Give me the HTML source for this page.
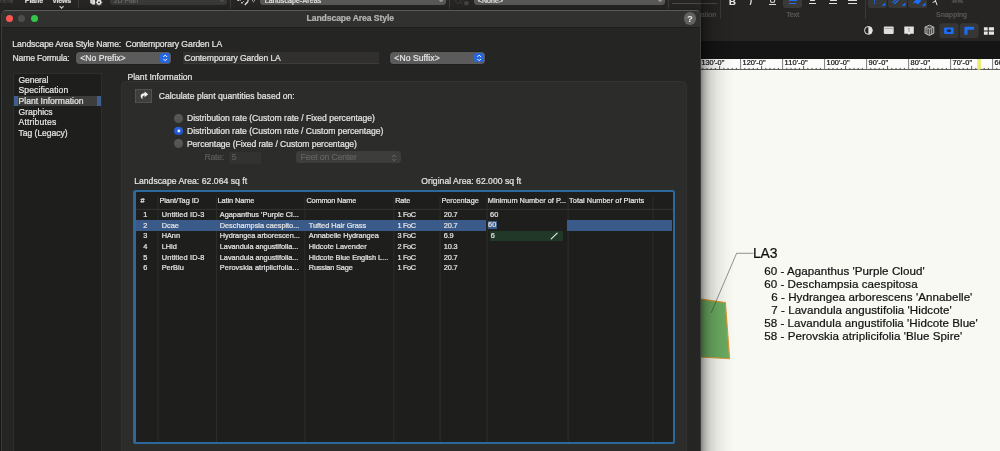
<!DOCTYPE html>
<html lang="en"><head><meta charset="utf-8"><title>Landscape Area Style</title>
<style>
html,body{margin:0;padding:0}
body{width:1000px;height:451px;overflow:hidden;background:#262524;position:relative;font-family:"Liberation Sans",sans-serif}
.layer{position:absolute;left:0;top:0;width:1000px;height:451px;overflow:hidden;will-change:transform}
.t{position:absolute;white-space:nowrap;line-height:12px;-webkit-text-stroke:.22px currentColor}
.a{position:absolute}
.dd{position:absolute;background:#5b5b5b;border-radius:3.5px;box-shadow:0 0 0 .5px rgba(0,0,0,.25)}
.step{position:absolute;background:#2667e0;border-radius:2.5px}
.sep{position:absolute;width:1px;background:#3a3a39}
</style></head><body>

<!-- ================= app toolbar ================= -->
<div class="layer" style="height:41.2px;background:#262524">
  <div class="sep" style="left:78px;top:0;height:8px"></div>
  <svg class="a" style="left:58px;top:4.5px" width="8" height="5" viewBox="0 0 8 5"><path d="M1.6 1.1 L3.6 3.1 L5.6 1.1" fill="none" stroke="#d8d8d8" stroke-width="1.1"/></svg>
  <svg class="a" style="left:89px;top:0" width="15" height="7" viewBox="0 0 15 7"><path d="M1.2 0H6.1V4.5L3.9 4.8 1.2 2.9z" fill="#dadada"/><path d="M3.2 0V3.9" stroke="#9a9a9a" stroke-width=".5"/><circle cx="10" cy="2.3" r="1.75" fill="none" stroke="#e4e4e4" stroke-width="1.5"/><path d="M10 -1v6.6M6.7 2.3h6.6M7.7 0l4.6 4.6M12.3 0L7.7 4.6" stroke="#e4e4e4" stroke-width="1"/><circle cx="10" cy="2.3" r=".9" fill="#262524"/></svg>
  <div class="a" style="left:109.8px;top:-6px;width:117.2px;height:10.9px;background:#393938;border-radius:3.5px"></div>
  <svg class="a" style="left:219px;top:0" width="6" height="4" viewBox="0 0 6 4"><path d="M1.6 0L3.1 1.5 4.6 0" fill="none" stroke="#666" stroke-width=".9"/></svg>
  <div class="sep" style="left:230.3px;top:0;height:8.5px"></div>
  <svg class="a" style="left:236px;top:0" width="22" height="6" viewBox="0 0 22 6"><path d="M1.4 0h1.5v.9H1.4zM3.4 0h1.6v.6H3.4zM5.2 2.1h1.5v1.4H5.2zM11.2 0h1.7v.8h-1.7z" fill="#e2e2e2"/><path d="M9.2 4.5L11.9 1.8" stroke="#ececec" stroke-width="1.3" stroke-linecap="round"/><path d="M7.2 1.2l1 .9" stroke="#cfcfcf" stroke-width=".8"/><path d="M16.4 0c0 2.2 2.2 2.2 2.2 0" stroke="#d0d0d0" stroke-width=".8" fill="none"/></svg>
  <div class="a" style="left:260.4px;top:-6px;width:185.5px;height:10.9px;background:#585857;border-radius:3.5px"></div>
  <svg class="a" style="left:438px;top:0" width="6" height="4" viewBox="0 0 6 4"><path d="M1.6 0L3.1 1.5 4.6 0" fill="none" stroke="#dcdcdc" stroke-width=".9"/></svg>
  <div class="sep" style="left:449px;top:0;height:8.5px"></div>
  <svg class="a" style="left:454px;top:0" width="16" height="7" viewBox="0 0 16 7"><path d="M1.6 0c0 4.6 5 4.6 5 0M6 2.2l2.6 1.4M8.6 0l.8.8" fill="none" stroke="#3c3c3b" stroke-width=".9"/><circle cx="12.4" cy="3.2" r="2.3" fill="#444443"/></svg>
  <div class="a" style="left:474px;top:-6px;width:191px;height:10.9px;background:#585857;border-radius:3.5px"></div>
  <svg class="a" style="left:657px;top:0" width="6" height="4" viewBox="0 0 6 4"><path d="M1.6 0L3.1 1.5 4.6 0" fill="none" stroke="#dcdcdc" stroke-width=".9"/></svg>
  <div class="sep" style="left:668.3px;top:0;height:8.5px"></div>
  <div class="a" style="left:672px;top:3px;width:45px;height:1px;background:#4a4a49"></div>
  <div class="sep" style="left:720px;top:0;height:19px"></div>
  <!-- text style buttons -->
  <div class="a" style="left:769.3px;top:3.6px;width:6.7px;height:.9px;background:#dcdcdc"></div>
  <div class="a" style="left:783px;top:-5px;width:19.2px;height:12.8px;background:#3a3a39;border-radius:3px"></div>
  <div class="a" style="left:788.7px;top:-.6px;width:8.1px;height:1.2px;background:#1f6df2"></div>
  <div class="a" style="left:789.3px;top:3px;width:6.9px;height:1.2px;background:#1f6df2"></div>
  <div class="a" style="left:810.3px;top:-.6px;width:5px;height:1.2px;background:#e0e0e0"></div>
  <div class="a" style="left:809px;top:2.8px;width:7px;height:1.1px;background:#e0e0e0"></div>
  <div class="a" style="left:830.2px;top:-.6px;width:6.8px;height:1.2px;background:#e0e0e0"></div>
  <div class="a" style="left:829.2px;top:2.8px;width:7.8px;height:1.1px;background:#e0e0e0"></div>
  <div class="a" style="left:848px;top:-.6px;width:8.5px;height:1.2px;background:#e0e0e0"></div>
  <div class="a" style="left:848px;top:2.8px;width:8.5px;height:1.1px;background:#e0e0e0"></div>
  <div class="sep" style="left:865.2px;top:0;height:19px"></div>
  <!-- snapping buttons -->
  <div class="a" style="left:868.1px;top:-5px;width:18.8px;height:12.7px;background:#373736;border-radius:2.5px"></div>
  <div class="a" style="left:888px;top:-5px;width:18.9px;height:12.7px;background:#373736;border-radius:2.5px"></div>
  <div class="a" style="left:908px;top:-5px;width:19px;height:12.7px;background:#373736;border-radius:2.5px"></div>
  <svg class="a" style="left:868px;top:0" width="60" height="8" viewBox="0 0 60 8">
    <path d="M6.6 0v1.2M6.6 2.3v1.5" stroke="#1f6df2" stroke-width="1.2"/>
    <path d="M13.5 5.8l3.7-3.4v3.4zM33.6 5.8l3.7-3.4v3.4zM53.8 5.8l3.7-3.4v3.4z" fill="#1f6df2"/>
    <path d="M24.3 2.6L27.4 0M26.3 4L30.4 0" stroke="#1f6df2" stroke-width="1.2"/>
    <path d="M47.5 0h5.3v1.6L50 4.5 47.2 2.7 45.4 3.7 45 3.1z" fill="#1f6df2"/>
  </svg>
  <svg class="a" style="left:931px;top:0" width="8" height="6" viewBox="0 0 8 6"><path d="M4.2 0C4.8 1.6 5.4 3.2 6 4.8M4.7 1.3L2 2.3" stroke="#e6e6e6" stroke-width="1" fill="none" stroke-linecap="round"/></svg>
  <svg class="a" style="left:950px;top:0" width="16" height="4" viewBox="0 0 16 4"><path d="M3 0h4.2v2.8H1.2zM7.9 0h4.2l1.8 2.8h-6z" fill="#484847"/></svg>
  <!-- second row icons -->
  <svg class="a" style="left:860px;top:22px" width="140" height="18" viewBox="0 0 140 18">
    <circle cx="8.4" cy="8.4" r="3.9" fill="none" stroke="#e4e4e4" stroke-width="1"/>
    <path d="M8.4 4.5a3.9 3.9 0 0 1 0 7.8z" fill="#e4e4e4"/>
    <rect x="23.8" y="4.6" width="9.9" height="7.3" rx=".8" fill="#dedede"/>
    <rect x="24.5" y="6.3" width="8.5" height=".6" fill="#8a8a8a"/>
    <path d="M44.3 4.5h9.5v7.2h-3.6l-1.2 1.4-1.2-1.4h-3.5z" fill="#e4e4e4"/>
    <path d="M49 6v3.6" stroke="#555" stroke-width="1" stroke-dasharray="1 .6"/>
    <path d="M69.4 3.2l4.4 1.9v6.2l-4.4 2.1-4.4-2.1V5.1z" fill="#4a4a49" stroke="#c8c8c8" stroke-width=".9" stroke-linejoin="round"/>
    <path d="M65 5.1l4.4 1.8 4.4-1.8M69.4 6.9v6.4M67 6.2v6M71.6 6.2v6" fill="none" stroke="#c8c8c8" stroke-width=".7"/>
    <rect x="79.5" y="1.2" width="19" height="14.8" rx="3" fill="#363635"/>
    <rect x="99.7" y="1.2" width="19" height="14.8" rx="3" fill="#363635"/>
    <rect x="84.1" y="5.5" width="9.5" height="6.6" rx=".8" fill="#1f6df2"/>
    <ellipse cx="88.9" cy="8.8" rx="2.3" ry="1.45" fill="#1d2a44"/>
    <path d="M104.4 4.8h9.7v3h-6.6v4.9h-3.1z" fill="#1f6df2"/>
    <path d="M123.9 5.2h3.8v3.3h-3.8zM128.8 5.2h5.2v3.3h-5.2zM123.9 9.5h3.8v3.3h-3.8zM128.8 9.5h5.2v3.3h-5.2z" fill="#e6e6e6"/>
  </svg>
<span class="t" style="left:676.29px;top:9.43px;font-size:7px;color:#5e5e5d;letter-spacing:0.061px;">Visualization</span>
<span class="t" style="left:786.49px;top:9.43px;font-size:7px;color:#5e5e5d;letter-spacing:-0.041px;">Text</span>
<span class="t" style="left:936.09px;top:9.43px;font-size:7px;color:#5e5e5d;letter-spacing:0.175px;">Snapping</span>
<span class="t" style="left:-2.71px;top:-5.43px;font-size:7px;color:#4a4a4a;letter-spacing:0.291px;">View</span>
<span class="t" style="left:24.79px;top:-5.43px;font-size:7px;color:#dcdcdc;letter-spacing:-0.067px;font-weight:bold;">Plane</span>
<span class="t" style="left:52.29px;top:-5.43px;font-size:7px;color:#dcdcdc;letter-spacing:-0.200px;font-weight:bold;">Views</span>
<span class="t" style="left:113.79px;top:-5.13px;font-size:7px;color:#686868;letter-spacing:-0.081px;">2D Plan</span>
<span class="t" style="left:264.79px;top:-5.13px;font-size:7px;color:#e4e4e4;letter-spacing:0.110px;">Landscape-Areas</span>
<span class="t" style="left:477.79px;top:-5.13px;font-size:7px;color:#e4e4e4;letter-spacing:0.100px;">&lt;None&gt;</span>
<span class="t" style="left:729.12px;top:-4.39px;font-size:9.5px;color:#e0e0e0;font-weight:bold;">B</span>
<span class="t" style="left:749.42px;top:-4.39px;font-size:9.5px;color:#e0e0e0;font-style:italic;">I</span>
<span class="t" style="left:769.54px;top:-6.15px;font-size:8.5px;color:#e0e0e0;">U</span>
</div>

<!-- ================= dark band + canvas ================= -->
<div class="layer" style="top:41.2px;height:409.8px;background:#f9f9f3">
  <div class="a" style="left:0;top:0;width:1000px;height:17.6px;background:#151515"></div>
  <div class="a" style="left:0;top:0;width:700px;height:410px;background:#1c1c1b"></div>
</div>
<div class="layer">
  <!-- ruler -->
  <div class="a" style="left:700px;top:58.8px;width:300px;height:10.9px;background:#fcfcfa"></div>
  <svg class="a" style="left:696px;top:58.8px" width="304" height="12" viewBox="0 0 304 12">
        <path d="M0 10.45H304" stroke="#3c3c3c" stroke-width=".85"/>
    <path d="M2.60 0V10.5M44.60 0V10.5M86.60 0V10.5M128.60 0V10.5M170.60 0V10.5M212.60 0V10.5M254.60 0V10.5M296.60 0V10.5" stroke="#5a5a5a" stroke-width=".8" fill="none"/>
    <path d="M6.80 8.9V10.5M11.00 8.9V10.5M15.20 8.9V10.5M19.40 8.9V10.5M23.60 6.9V10.5M27.80 8.9V10.5M32.00 8.9V10.5M36.20 8.9V10.5M40.40 8.9V10.5M48.80 8.9V10.5M53.00 8.9V10.5M57.20 8.9V10.5M61.40 8.9V10.5M65.60 6.9V10.5M69.80 8.9V10.5M74.00 8.9V10.5M78.20 8.9V10.5M82.40 8.9V10.5M90.80 8.9V10.5M95.00 8.9V10.5M99.20 8.9V10.5M103.40 8.9V10.5M107.60 6.9V10.5M111.80 8.9V10.5M116.00 8.9V10.5M120.20 8.9V10.5M124.40 8.9V10.5M132.80 8.9V10.5M137.00 8.9V10.5M141.20 8.9V10.5M145.40 8.9V10.5M149.60 6.9V10.5M153.80 8.9V10.5M158.00 8.9V10.5M162.20 8.9V10.5M166.40 8.9V10.5M174.80 8.9V10.5M179.00 8.9V10.5M183.20 8.9V10.5M187.40 8.9V10.5M191.60 6.9V10.5M195.80 8.9V10.5M200.00 8.9V10.5M204.20 8.9V10.5M208.40 8.9V10.5M216.80 8.9V10.5M221.00 8.9V10.5M225.20 8.9V10.5M229.40 8.9V10.5M233.60 6.9V10.5M237.80 8.9V10.5M242.00 8.9V10.5M246.20 8.9V10.5M250.40 8.9V10.5M258.80 8.9V10.5M263.00 8.9V10.5M267.20 8.9V10.5M271.40 8.9V10.5M275.60 6.9V10.5M279.80 8.9V10.5M284.00 8.9V10.5M288.20 8.9V10.5M292.40 8.9V10.5M300.80 8.9V10.5M305.00 8.9V10.5M309.20 8.9V10.5M313.40 8.9V10.5M317.60 6.9V10.5M321.80 8.9V10.5M326.00 8.9V10.5M330.20 8.9V10.5M334.40 8.9V10.5" stroke="#2e2e2e" stroke-width=".8" fill="none"/>
    <rect x="281.4" y="0" width="3.3" height="10.6" fill="#e3e248"/>
    <rect x="282.4" y="0" width="1.2" height="10.6" fill="#f2f193"/>
  </svg>
  <!-- green landscape area -->
  <svg class="a" style="left:696px;top:240px" width="100" height="130" viewBox="0 0 100 130">
        <path d="M0 58.4L29.4 62.6 33.6 118.8 0 116.7z" fill="#6bab61" stroke="#dc9633" stroke-width="1.15" stroke-linejoin="round"/>
    <path d="M15.1 72.9L40.6 13.3H57.4" fill="none" stroke="#3c3c3c" stroke-width=".55"/>
  </svg>
<span class="t" style="left:752.88px;top:247.35px;font-size:13.9px;color:#111;">LA3</span>
<span class="t" style="left:764.15px;top:264.51px;font-size:11.6px;color:#111;letter-spacing:0.047px;">60 - Agapanthus 'Purple Cloud'</span>
<span class="t" style="left:764.15px;top:277.51px;font-size:11.6px;color:#111;letter-spacing:0.054px;">60 - Deschampsia caespitosa</span>
<span class="t" style="left:771.25px;top:290.81px;font-size:11.6px;color:#111;letter-spacing:0.038px;">6 - Hydrangea arborescens 'Annabelle'</span>
<span class="t" style="left:771.25px;top:304.21px;font-size:11.6px;color:#111;letter-spacing:0.037px;">7 - Lavandula angustifolia 'Hidcote'</span>
<span class="t" style="left:764.15px;top:317.21px;font-size:11.6px;color:#111;letter-spacing:0.042px;">58 - Lavandula angustifolia 'Hidcote Blue'</span>
<span class="t" style="left:764.15px;top:330.31px;font-size:11.6px;color:#111;letter-spacing:0.058px;">58 - Perovskia atriplicifolia 'Blue Spire'</span>
<span class="t" style="left:701.38px;top:56.83px;font-size:7.4px;color:#111;letter-spacing:0.001px;">130'-0"</span>
<span class="t" style="left:742.58px;top:56.83px;font-size:7.4px;color:#111;letter-spacing:0.001px;">120'-0"</span>
<span class="t" style="left:784.58px;top:56.83px;font-size:7.4px;color:#111;letter-spacing:0.092px;">110'-0"</span>
<span class="t" style="left:826.58px;top:56.83px;font-size:7.4px;color:#111;letter-spacing:0.001px;">100'-0"</span>
<span class="t" style="left:868.58px;top:56.83px;font-size:7.4px;color:#111;letter-spacing:0.123px;">90'-0"</span>
<span class="t" style="left:910.58px;top:56.83px;font-size:7.4px;color:#111;letter-spacing:0.123px;">80'-0"</span>
<span class="t" style="left:952.58px;top:56.83px;font-size:7.4px;color:#111;letter-spacing:0.123px;">70'-0"</span>
<span class="t" style="left:994.58px;top:56.83px;font-size:7.4px;color:#111;letter-spacing:0.123px;">60'-0"</span>
  <!-- dialog shadow over canvas -->
  <div class="a" style="left:700.6px;top:0;width:34px;height:451px;background:linear-gradient(90deg,rgba(0,0,0,.33) 0,rgba(0,0,0,.24) 10%,rgba(0,0,0,.15) 28%,rgba(0,0,0,.07) 50%,rgba(0,0,0,.022) 75%,rgba(0,0,0,0) 100%)"></div>
</div>

<!-- ================= dialog ================= -->
<div class="layer">
  <div class="a" style="left:1.1px;top:10.1px;width:699.7px;height:460px;background:#252524;border-radius:5px 5px 0 0;box-shadow:0 2px 10px rgba(0,0,0,.4);overflow:hidden">
    <div class="a" style="left:0;top:0;width:700px;height:17.1px;background:#313130;border-bottom:.8px solid #1d1d1c"></div>
    <div class="a" style="left:0;top:0;width:699.7px;height:460px;box-sizing:border-box;border:1.3px solid #3c3c3b;border-top:1px solid #5a5a59;border-radius:5px 5px 0 0"></div>
  </div>
  <!-- traffic lights -->
  <div class="a" style="left:5.6px;top:15.1px;width:7.4px;height:7.4px;border-radius:50%;background:#fc5753"></div>
  <div class="a" style="left:17.8px;top:15.1px;width:7.4px;height:7.4px;border-radius:50%;background:#4e4e4d"></div>
  <div class="a" style="left:30.7px;top:15.1px;width:7.4px;height:7.4px;border-radius:50%;background:#33c748"></div>
  <!-- help -->
  <div class="a" style="left:683.5px;top:12.4px;width:12.5px;height:12.5px;border-radius:50%;background:#626261"></div>
  <span class="t" style="left:687px;top:13px;font-size:9.5px;font-weight:bold;color:#ececec;-webkit-text-stroke:0">?</span>

  <!-- prefix dropdown -->
  <div class="dd" style="left:75.7px;top:51.6px;width:95.4px;height:12.2px"></div>
  <div class="step" style="left:160px;top:53px;width:10.4px;height:9.7px"></div>
  <svg class="a" style="left:160px;top:53px" width="10.4" height="9.7" viewBox="0 0 10.4 9.7"><path d="M3.4 3.9L5.2 2.1 7 3.9M3.4 5.9L5.2 7.7 7 5.9" fill="none" stroke="#fff" stroke-width="1"/></svg>
  <!-- name field -->
  <div class="a" style="left:182.6px;top:52.4px;width:196.2px;height:11.3px;background:#31302f;box-shadow:inset 0 -0.6px 0 #484847"></div>
  <!-- suffix dropdown -->
  <div class="dd" style="left:389.7px;top:51.5px;width:95.4px;height:12.2px"></div>
  <div class="step" style="left:474px;top:52.7px;width:10.4px;height:9.8px"></div>
  <svg class="a" style="left:474px;top:52.7px" width="10.4" height="9.8" viewBox="0 0 10.4 9.8"><path d="M3.4 3.9L5.2 2.1 7 3.9M3.4 5.9L5.2 7.7 7 5.9" fill="none" stroke="#fff" stroke-width="1"/></svg>

  <!-- category list -->
  <div class="a" style="left:13.6px;top:74px;width:87.6px;height:400px;background:#1e1e1d;box-shadow:0 0 0 .6px #343433"></div>
  <div class="a" style="left:13.8px;top:96.1px;width:87.3px;height:9.8px;background:#3f5f93"></div>
  <div class="a" style="left:17.7px;top:96.1px;width:79.4px;height:9.8px;background:#3d3d3c"></div>

  <!-- group box -->
  <div class="a" style="left:121.6px;top:82.3px;width:564.2px;height:400px;background:#2c2c2b;border-radius:3.5px;box-shadow:0 0 0 .7px #373736"></div>
  <!-- arrow button -->
  <div class="a" style="left:135.1px;top:88.9px;width:16.8px;height:13.8px;background:#3e3e3d;box-shadow:inset 0 0 0 .8px #575756"></div>
  <svg class="a" style="left:138px;top:90px" width="12" height="11" viewBox="0 0 12 11"><path d="M6.6 1.4L10.2 4.3 6.6 7.2V5.6C5 5.4 4.2 6.3 4.6 9 2.2 7.8 1.3 3.6 6.6 3z" fill="#f2f2f2"/></svg>

  <!-- radios -->
  <div class="a" style="left:174.4px;top:113.7px;width:8.9px;height:8.9px;border-radius:50%;background:linear-gradient(#5a5a59,#515150)"></div>
  <div class="a" style="left:174.4px;top:126.5px;width:8.9px;height:8.9px;border-radius:50%;background:linear-gradient(#2a66de,#1c52c6)"></div>
  <svg class="a" style="left:174px;top:126px" width="10" height="10" viewBox="0 0 10 10"><circle cx="4.85" cy="4.95" r="1.45" fill="#e9eefb"/></svg>
  <div class="a" style="left:174.4px;top:138.9px;width:8.9px;height:8.9px;border-radius:50%;background:linear-gradient(#5a5a59,#515150)"></div>
  <!-- disabled rate field + popup -->
  <div class="a" style="left:229.4px;top:151.9px;width:31.3px;height:11.8px;background:#323231"></div>
  <div class="a" style="left:296px;top:151.3px;width:104.9px;height:11.9px;background:#3d3d3c;border-radius:3.5px"></div>
  <svg class="a" style="left:390px;top:152.5px" width="8" height="10" viewBox="0 0 8 10"><path d="M2.2 3.9L4 2.1 5.8 3.9M2.2 5.9L4 7.7 5.8 5.9" fill="none" stroke="#707070" stroke-width=".9"/></svg>

  <!-- table -->
  <div class="a" style="left:133.2px;top:189.5px;width:541.6px;height:254.6px;background:#2b689c;border-radius:2.5px"></div>
  <div class="a" style="left:135.5px;top:191.9px;width:537px;height:249.9px;background:#1e1e1d"></div>
  <!-- grid lines -->
  <svg class="a" style="left:135.5px;top:191.9px" width="537" height="249.9" viewBox="135.5 191.9 537 249.9">
    <path d="M135.4 209.3H672.7" stroke="#343433" stroke-width=".9"/>
    <path d="M157.5 196V442M215.9 196V442M304.4 196V442M393.4 196V442M439.6 196V442M486.6 196V442M567.6 196V442M652.5 196V442" stroke="#30302f" stroke-width=".9"/>
  </svg>
  <!-- selection -->
  <div class="a" style="left:135.5px;top:220.1px;width:350.8px;height:10.7px;background:#3a5b8a"></div>
  <div class="a" style="left:567.3px;top:220.1px;width:105.2px;height:10.7px;background:#3a5b8a"></div>
  <div class="a" style="left:487.6px;top:220.6px;width:9.7px;height:8.2px;background:#3a5b8a"></div>
  <div class="a" style="left:489.9px;top:231.3px;width:73.3px;height:9.5px;background:#213829"></div>
  <svg class="a" style="left:550px;top:232px" width="9" height="8" viewBox="0 0 9 8"><path d="M1.2 6.9L7.2 1.2" stroke="#e2ecdf" stroke-width="1.15" stroke-linecap="round"/></svg>
<span class="t" style="left:306.54px;top:12.25px;font-size:8.6px;color:#b4b4b4;letter-spacing:-0.079px;font-weight:bold;">Landscape Area Style</span>
<span class="t" style="left:12.34px;top:37.75px;font-size:8.6px;color:#e4e4e4;letter-spacing:-0.096px;">Landscape Area Style Name:</span>
<span class="t" style="left:125.54px;top:37.75px;font-size:8.6px;color:#e4e4e4;letter-spacing:-0.080px;">Contemporary Garden LA</span>
<span class="t" style="left:12.54px;top:52.15px;font-size:8.6px;color:#e4e4e4;letter-spacing:-0.175px;">Name Formula:</span>
<span class="t" style="left:80.34px;top:51.95px;font-size:8.6px;color:#e4e4e4;letter-spacing:-0.007px;">&lt;No Prefix&gt;</span>
<span class="t" style="left:184.34px;top:52.35px;font-size:8.6px;color:#e4e4e4;letter-spacing:-0.090px;">Contemporary Garden LA</span>
<span class="t" style="left:394.34px;top:51.75px;font-size:8.6px;color:#e4e4e4;letter-spacing:0.057px;">&lt;No Suffix&gt;</span>
<span class="t" style="left:18.54px;top:73.95px;font-size:8.6px;color:#e4e4e4;letter-spacing:-0.110px;">General</span>
<span class="t" style="left:18.54px;top:84.05px;font-size:8.6px;color:#e4e4e4;letter-spacing:0.082px;">Specification</span>
<span class="t" style="left:18.54px;top:95.15px;font-size:8.6px;color:#e4e4e4;letter-spacing:0.003px;">Plant Information</span>
<span class="t" style="left:18.54px;top:105.65px;font-size:8.6px;color:#e4e4e4;letter-spacing:-0.054px;">Graphics</span>
<span class="t" style="left:18.54px;top:116.45px;font-size:8.6px;color:#e4e4e4;letter-spacing:0.156px;">Attributes</span>
<span class="t" style="left:18.54px;top:127.15px;font-size:8.6px;color:#e4e4e4;letter-spacing:-0.052px;">Tag (Legacy)</span>
<span class="t" style="left:127.44px;top:71.15px;font-size:8.6px;color:#e4e4e4;letter-spacing:-0.003px;">Plant Information</span>
<span class="t" style="left:158.74px;top:89.55px;font-size:8.6px;color:#e4e4e4;letter-spacing:-0.004px;">Calculate plant quantities based on:</span>
<span class="t" style="left:186.94px;top:112.35px;font-size:8.6px;color:#e4e4e4;letter-spacing:-0.013px;">Distribution rate (Custom rate / Fixed percentage)</span>
<span class="t" style="left:186.94px;top:125.15px;font-size:8.6px;color:#e4e4e4;letter-spacing:-0.017px;">Distribution rate (Custom rate / Custom percentage)</span>
<span class="t" style="left:186.94px;top:137.55px;font-size:8.6px;color:#e4e4e4;letter-spacing:-0.058px;">Percentage (Fixed rate / Custom percentage)</span>
<span class="t" style="left:204.54px;top:151.15px;font-size:8.6px;color:#5c5c5c;letter-spacing:-0.208px;">Rate:</span>
<span class="t" style="left:231.74px;top:151.15px;font-size:8.6px;color:#5c5c5c;">5</span>
<span class="t" style="left:300.54px;top:150.95px;font-size:8.6px;color:#626262;letter-spacing:-0.070px;">Feet on Center</span>
<span class="t" style="left:134.14px;top:174.75px;font-size:8.6px;color:#e4e4e4;letter-spacing:0.045px;">Landscape Area: 62.064 sq ft</span>
<span class="t" style="left:421.34px;top:174.75px;font-size:8.6px;color:#e4e4e4;letter-spacing:0.021px;">Original Area: 62.000 sq ft</span>
<span class="t" style="left:140.58px;top:195.13px;font-size:7.35px;color:#e4e4e4;">#</span>
<span class="t" style="left:159.38px;top:195.13px;font-size:7.35px;color:#e4e4e4;letter-spacing:-0.034px;">Plant/Tag ID</span>
<span class="t" style="left:217.48px;top:195.13px;font-size:7.35px;color:#e4e4e4;letter-spacing:-0.069px;">Latin Name</span>
<span class="t" style="left:306.38px;top:195.13px;font-size:7.35px;color:#e4e4e4;letter-spacing:-0.158px;">Common Name</span>
<span class="t" style="left:395.18px;top:195.13px;font-size:7.35px;color:#e4e4e4;letter-spacing:-0.158px;">Rate</span>
<span class="t" style="left:441.38px;top:195.13px;font-size:7.35px;color:#e4e4e4;letter-spacing:-0.013px;">Percentage</span>
<span class="t" style="left:487.78px;top:195.13px;font-size:7.35px;color:#e4e4e4;letter-spacing:0.000px;">Minimum Number of P...</span>
<span class="t" style="left:569.08px;top:195.13px;font-size:7.35px;color:#e4e4e4;letter-spacing:0.040px;">Total Number of Plants</span>
<span class="t" style="left:143.18px;top:208.53px;font-size:7.35px;color:#e4e4e4;">1</span>
<span class="t" style="left:161.68px;top:208.53px;font-size:7.35px;color:#e4e4e4;letter-spacing:0.159px;">Untitled ID-3</span>
<span class="t" style="left:219.78px;top:208.53px;font-size:7.35px;color:#e4e4e4;letter-spacing:0.007px;">Agapanthus 'Purple Cl...</span>
<span class="t" style="left:397.38px;top:208.53px;font-size:7.35px;color:#e4e4e4;letter-spacing:-.3px;">1 FoC</span>
<span class="t" style="left:443.78px;top:208.53px;font-size:7.35px;color:#e4e4e4;letter-spacing:-.15px;">20.7</span>
<span class="t" style="left:143.18px;top:219.53px;font-size:7.35px;color:#e4e4e4;">2</span>
<span class="t" style="left:161.68px;top:219.53px;font-size:7.35px;color:#e4e4e4;">Dcae</span>
<span class="t" style="left:219.78px;top:219.53px;font-size:7.35px;color:#e4e4e4;letter-spacing:-0.026px;">Deschampsia caespito...</span>
<span class="t" style="left:308.78px;top:219.53px;font-size:7.35px;color:#e4e4e4;letter-spacing:-0.015px;">Tufted Hair Grass</span>
<span class="t" style="left:397.38px;top:219.53px;font-size:7.35px;color:#e4e4e4;letter-spacing:-.3px;">1 FoC</span>
<span class="t" style="left:443.78px;top:219.53px;font-size:7.35px;color:#e4e4e4;letter-spacing:-.15px;">20.7</span>
<span class="t" style="left:143.18px;top:229.83px;font-size:7.35px;color:#e4e4e4;">3</span>
<span class="t" style="left:161.68px;top:229.83px;font-size:7.35px;color:#e4e4e4;">HAnn</span>
<span class="t" style="left:219.78px;top:229.83px;font-size:7.35px;color:#e4e4e4;letter-spacing:-0.040px;">Hydrangea arborescen...</span>
<span class="t" style="left:308.78px;top:229.83px;font-size:7.35px;color:#e4e4e4;letter-spacing:-0.033px;">Annabelle Hydrangea</span>
<span class="t" style="left:397.38px;top:229.83px;font-size:7.35px;color:#e4e4e4;letter-spacing:-.3px;">3 FoC</span>
<span class="t" style="left:443.78px;top:229.83px;font-size:7.35px;color:#e4e4e4;letter-spacing:-.15px;">6.9</span>
<span class="t" style="left:143.18px;top:240.53px;font-size:7.35px;color:#e4e4e4;">4</span>
<span class="t" style="left:161.68px;top:240.53px;font-size:7.35px;color:#e4e4e4;">LHid</span>
<span class="t" style="left:219.78px;top:240.53px;font-size:7.35px;color:#e4e4e4;letter-spacing:-0.024px;">Lavandula angustifolia...</span>
<span class="t" style="left:308.78px;top:240.53px;font-size:7.35px;color:#e4e4e4;letter-spacing:0.018px;">Hidcote Lavender</span>
<span class="t" style="left:397.38px;top:240.53px;font-size:7.35px;color:#e4e4e4;letter-spacing:-.3px;">2 FoC</span>
<span class="t" style="left:443.78px;top:240.53px;font-size:7.35px;color:#e4e4e4;letter-spacing:-.15px;">10.3</span>
<span class="t" style="left:143.18px;top:251.53px;font-size:7.35px;color:#e4e4e4;">5</span>
<span class="t" style="left:161.68px;top:251.53px;font-size:7.35px;color:#e4e4e4;letter-spacing:0.159px;">Untitled ID-8</span>
<span class="t" style="left:219.78px;top:251.53px;font-size:7.35px;color:#e4e4e4;letter-spacing:-0.024px;">Lavandula angustifolia...</span>
<span class="t" style="left:308.78px;top:251.53px;font-size:7.35px;color:#e4e4e4;letter-spacing:-0.024px;">Hidcote Blue English L...</span>
<span class="t" style="left:397.38px;top:251.53px;font-size:7.35px;color:#e4e4e4;letter-spacing:-.3px;">1 FoC</span>
<span class="t" style="left:443.78px;top:251.53px;font-size:7.35px;color:#e4e4e4;letter-spacing:-.15px;">20.7</span>
<span class="t" style="left:143.18px;top:261.63px;font-size:7.35px;color:#e4e4e4;">6</span>
<span class="t" style="left:161.68px;top:261.63px;font-size:7.35px;color:#e4e4e4;">PerBlu</span>
<span class="t" style="left:219.78px;top:261.63px;font-size:7.35px;color:#e4e4e4;letter-spacing:0.085px;">Perovskia atriplicifolia...</span>
<span class="t" style="left:308.78px;top:261.63px;font-size:7.35px;color:#e4e4e4;letter-spacing:-0.154px;">Russian Sage</span>
<span class="t" style="left:397.38px;top:261.63px;font-size:7.35px;color:#e4e4e4;letter-spacing:-.3px;">1 FoC</span>
<span class="t" style="left:443.78px;top:261.63px;font-size:7.35px;color:#e4e4e4;letter-spacing:-.15px;">20.7</span>
<span class="t" style="left:490.08px;top:208.53px;font-size:7.35px;color:#e4e4e4;">60</span>
<span class="t" style="left:488.08px;top:219.13px;font-size:7.35px;color:#e4e4e4;">60</span>
<span class="t" style="left:490.78px;top:229.83px;font-size:7.35px;color:#e4e4e4;">6</span>
</div>
</body></html>
